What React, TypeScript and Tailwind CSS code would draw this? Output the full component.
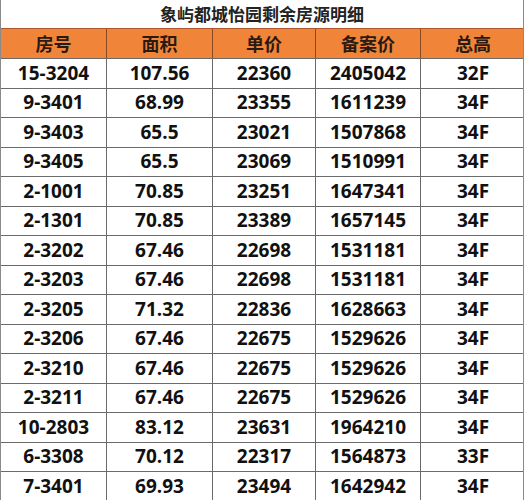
import React from "react";

const rows: [string, string, string, string, string][] = [
  ["15-3204", "107.56", "22360", "2405042", "32F"],
  ["9-3401", "68.99", "23355", "1611239", "34F"],
  ["9-3403", "65.5", "23021", "1507868", "34F"],
  ["9-3405", "65.5", "23069", "1510991", "34F"],
  ["2-1001", "70.85", "23251", "1647341", "34F"],
  ["2-1301", "70.85", "23389", "1657145", "34F"],
  ["2-3202", "67.46", "22698", "1531181", "34F"],
  ["2-3203", "67.46", "22698", "1531181", "34F"],
  ["2-3205", "71.32", "22836", "1628663", "34F"],
  ["2-3206", "67.46", "22675", "1529626", "34F"],
  ["2-3210", "67.46", "22675", "1529626", "34F"],
  ["2-3211", "67.46", "22675", "1529626", "34F"],
  ["10-2803", "83.12", "23631", "1964210", "34F"],
  ["6-3308", "70.12", "22317", "1564873", "33F"],
  ["7-3401", "69.93", "23494", "1642942", "34F"],
];

const headers = ["房号", "面积", "单价", "备案价", "总高"];
const cols = "grid grid-cols-[105px_106px_103px_105px_105px]";

export default function App() {
  return (
    <div className="w-[525px] h-[500px] overflow-hidden bg-white font-['Open_Sans','Noto_Sans_CJK_SC',sans-serif]">
      <div className="w-[524px] border-l border-r border-[#8a8a8a]">
        <div className="h-[28px] flex items-center justify-center text-[17px] font-bold text-[#222] font-['Noto_Sans_CJK_SC',sans-serif]">
          象屿都城怡园剩余房源明细
        </div>
        <div className={`${cols} h-[30px] bg-[#f0853a] border-t border-[#b0582a]`}>
          {headers.map((h, i) => (
            <div
              key={h}
              className={`flex items-center justify-center text-[18px] font-bold text-[#2a1a12] font-['Noto_Sans_CJK_SC',sans-serif] ${i > 0 ? "border-l border-[#8a4a25]" : ""}`}
            >
              {h}
            </div>
          ))}
        </div>
        {rows.map((r, ri) => (
          <div key={ri} className={`${cols} h-[29.5px] border-t border-[#6a6a6a]`}>
            {r.map((c, i) => (
              <div
                key={i}
                className={`flex items-center justify-center text-[19px] font-bold text-[#111] leading-none ${i > 0 ? "border-l border-[#6a6a6a]" : ""}`}
              >
                {c}
              </div>
            ))}
          </div>
        ))}
      </div>
    </div>
  );
}
